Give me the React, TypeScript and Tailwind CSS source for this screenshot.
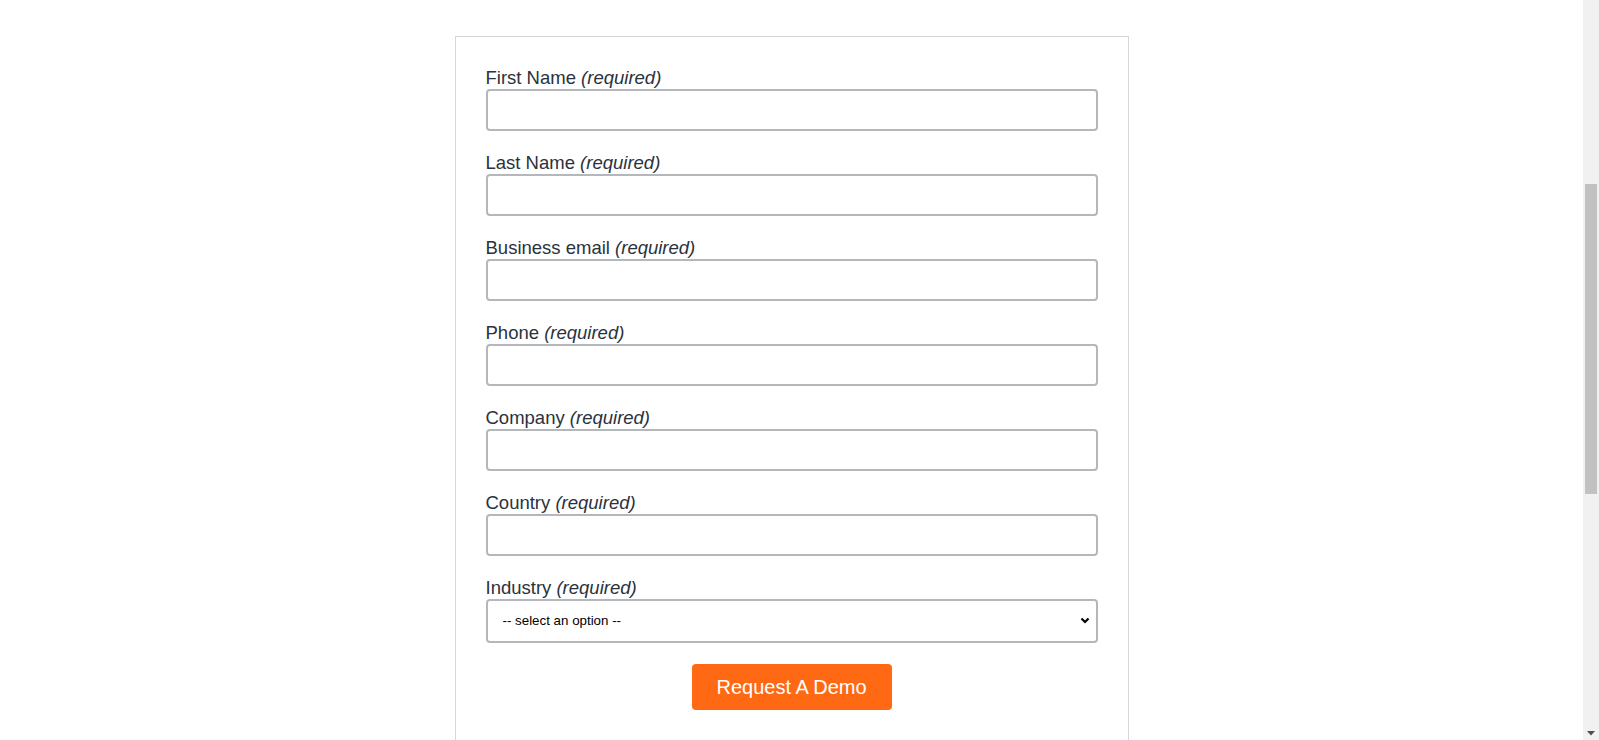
import React from 'react';

const fields = ['First Name', 'Last Name', 'Business email', 'Phone', 'Company', 'Country'];

const Label: React.FC<{ text: string }> = ({ text }) => (
    <label className="block text-[18.5px] leading-[22px] text-[#2a323d]">
        {text} <em className="italic">(required)</em>
    </label>
);

const App: React.FC = () => {
    return (
        <div className="flex h-[740px] overflow-hidden bg-white font-['Liberation_Sans',Arial,sans-serif]">
            <main className="flex flex-1 justify-center pt-[36px]">
                <form className="w-[674px] shrink-0 self-start border border-[#d3d6da] px-[30px] pt-[30px] pb-[30px]">
                    {fields.map((f) => (
                        <div key={f} className="mb-[21px]">
                            <Label text={f} />
                            <input
                                type="text"
                                className="block h-[42px] w-full rounded-[4px] border-2 border-[#b4b7bc] bg-white px-3 outline-none"
                            />
                        </div>
                    ))}
                    <div>
                        <Label text="Industry" />
                        <div className="relative">
                            <select className="block h-[44px] w-full appearance-none rounded-[4px] border-2 border-[#b4b7bc] bg-white pl-[15px] text-[13.33px] text-black outline-none">
                                <option>-- select an option --</option>
                            </select>
                            <svg
                                className="pointer-events-none absolute right-[8px] top-[18px]"
                                width="10"
                                height="7"
                                viewBox="0 0 10 7"
                            >
                                <path d="M1.5 1.5 L5 5 L8.5 1.5" fill="none" stroke="#000" strokeWidth="2.2" />
                            </svg>
                        </div>
                    </div>
                    <div className="mt-[21px] flex justify-center">
                        <button
                            type="button"
                            className="h-[46px] w-[200px] rounded-[4px] bg-[#ff6914] text-[20px] text-white"
                        >
                            Request A Demo
                        </button>
                    </div>
                </form>
            </main>
            {/* fake browser scrollbar */}
            <div className="flex w-[16px] shrink-0 flex-col bg-[#f1f1f1]">
                <div className="h-[184px]" />
                <div className="mx-[2px] h-[310px] bg-[#c1c1c1]" />
                <div className="flex-1" />
                <div className="flex h-[14px] items-center justify-center">
                    <svg width="8" height="5" viewBox="0 0 8 5">
                        <path d="M0 0 H8 L4 4.5 Z" fill="#505050" />
                    </svg>
                </div>
            </div>
        </div>
    );
};

export default App;
